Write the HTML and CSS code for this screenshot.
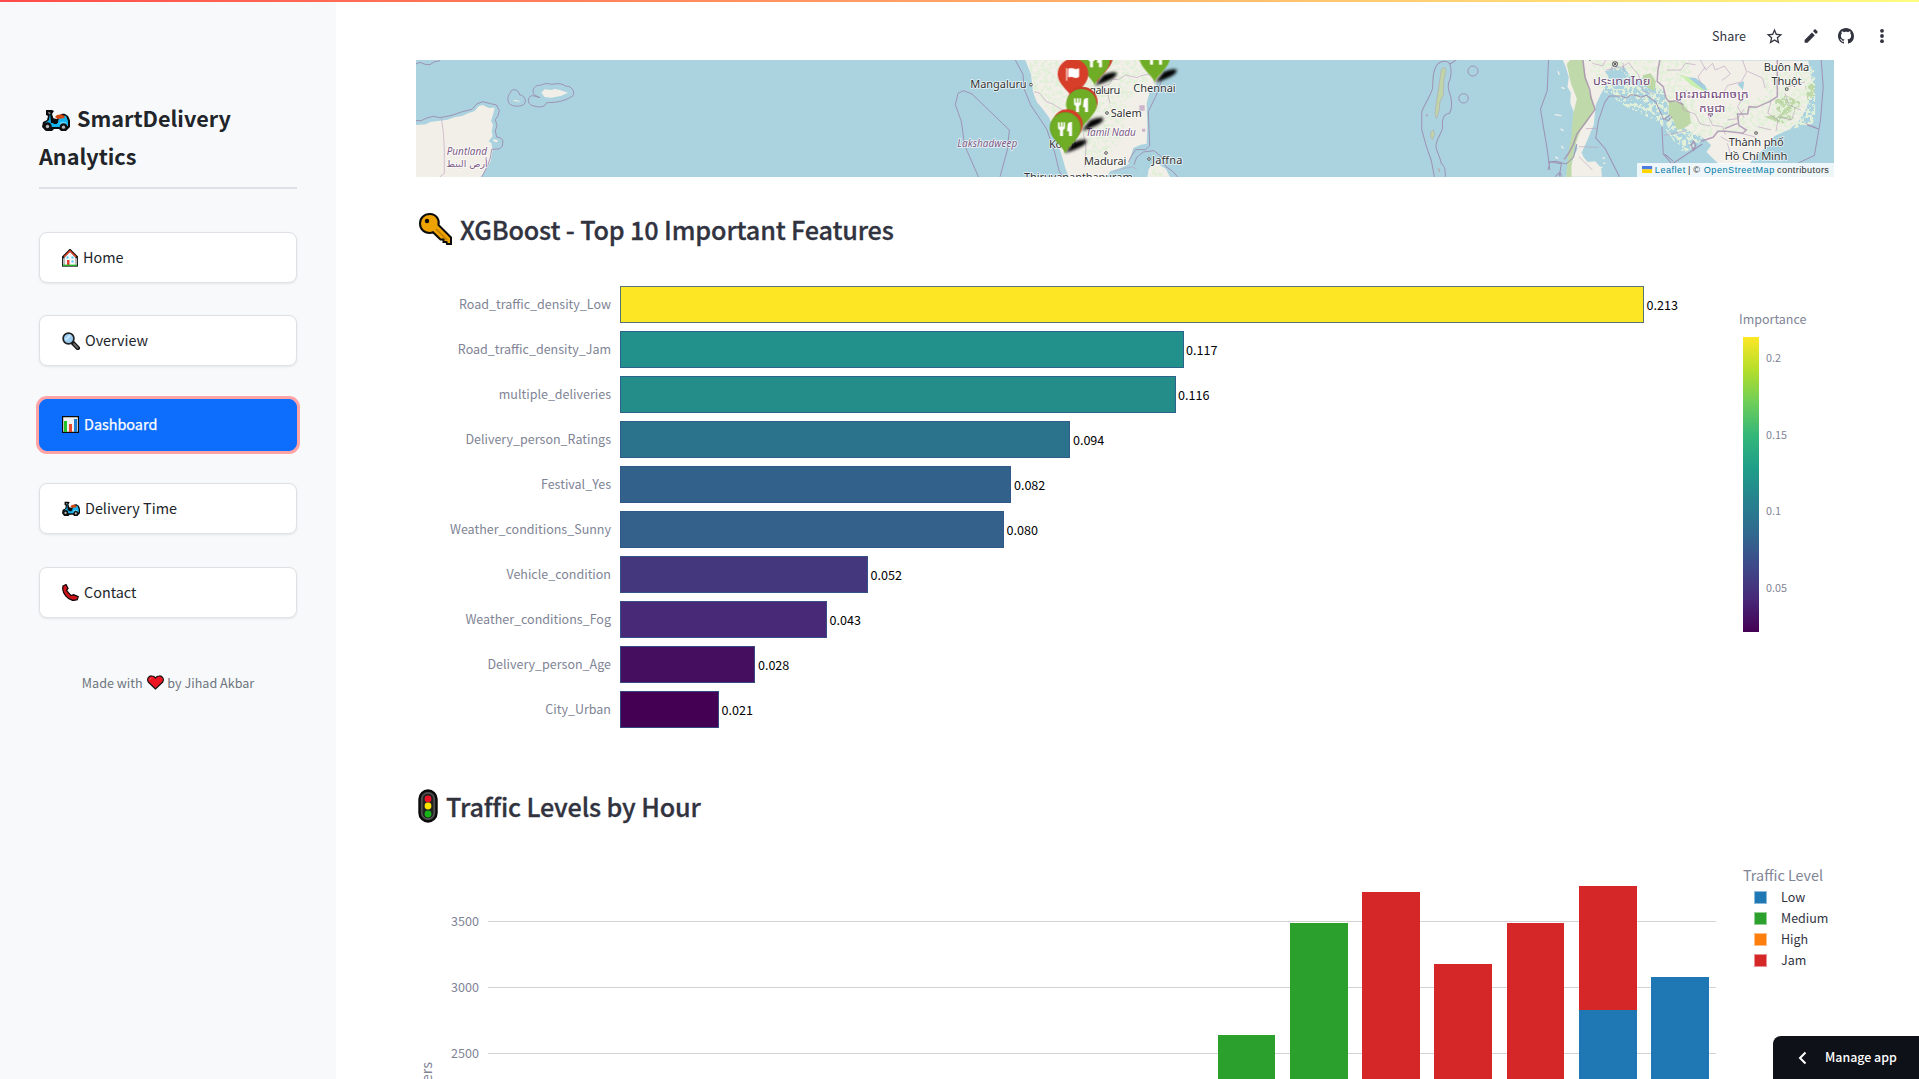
FILE: index.html
```html
<!DOCTYPE html>
<html lang="en">
<head>
<meta charset="utf-8">
<title>SmartDelivery Analytics</title>
<link rel="stylesheet" href="styles.css">
</head>
<body>
<svg class="defs" width="0" height="0" aria-hidden="true">
  <symbol id="scooter" viewBox="0 0 28 22" preserveAspectRatio="none">
    <path d="M4 1h6l2 1-2 3 2 6 3-1c1-3 4-6 8-5l3 2c2 3 3 7 2 11l-4 4h-5l-2-2h-5l-2 2H4l-4-4 1-5 4-2 1-4-2-1z" fill="#0b0b0b"/>
    <path d="M8 4l1 10h7c0-5 3-8 8-7l2 5v5l-9 1H10l-7-4 4-3z" fill="#16b4ef"/>
    <path d="M6 3l3 1-2 1z" fill="#bbb"/>
    <path d="M13 8c2-3 7-3 9-1l1 2-7 1z" fill="#d24a10"/>
    <path d="M10 9l5 1v5h-3l-3-3z" fill="#0b0b0b"/>
    <ellipse cx="21" cy="14.500" rx="3.500" ry="1.800" fill="#63d6fb"/>
    <circle cx="5.500" cy="17.500" r="4.200" fill="#111"/><circle cx="5.500" cy="17.500" r="1.700" fill="#bbb"/>
    <circle cx="21.500" cy="18" r="3.700" fill="#111"/><circle cx="21.500" cy="18.200" r="1.600" fill="#bbb"/>
  </symbol>
</svg>

<div class="app">
  <aside class="sidebar">
    <h1 class="brand"><svg class="brand-icon"><use href="#scooter"/></svg>SmartDelivery<br>Analytics</h1>
    <nav class="nav">
      <a class="nav-item"><svg class="ico" width="16" height="18" viewBox="0 0 16 18"><path d="M2 8v8.500h12V8L8 2z" fill="#f7f7f7" stroke="#777"/><path d="M.6 8.600L8 1.200l7.400 7.400" fill="none" stroke="#111" stroke-width="2.400"/><path d="M2 7.800L8 2l6 5.800" fill="none" stroke="#e8452c" stroke-width="1.300"/><path d="M5 11h2.500v5H5z" fill="#e33b2e"/><path d="M4.500 7.500h2v2h-2zm5 0h2v2h-2zm0 4h2v2h-2z" fill="#4ccbf2"/><path d="M.5 8v9M15.500 8v9M0 17.200h16" stroke="#222"/><path d="M1 16.300h14" stroke="#1fb52a" stroke-width="1.300"/></svg><span>Home</span></a>
      <a class="nav-item"><svg class="ico" width="18" height="18" viewBox="0 0 18 18"><path d="M10.500 10.500l5.300 5.500" stroke="#111" stroke-width="4.400" stroke-linecap="round"/><path d="M12 12l3.600 3.700" stroke="#666" stroke-width="2" stroke-linecap="round"/><circle cx="6.500" cy="6.500" r="5.400" fill="#9bcdf2" stroke="#222" stroke-width="1.700"/><path d="M3.500 8l5-5" stroke="#c9e6fa" stroke-width="1.800"/></svg><span>Overview</span></a>
      <a class="nav-item active"><svg class="ico" width="17" height="17" viewBox="0 0 17 17"><path d="M.6.600h15.800v15.800H.600z" fill="#f1f0f2" stroke="#0a0a0a" stroke-width="1.200"/><path d="M2 5h3v11H2z" fill="#24c52b"/><path d="M7 8h3v8H7z" fill="#e9472c"/><path d="M12 3h3v13h-3z" fill="#1d7fd3"/></svg><span>Dashboard</span></a>
      <a class="nav-item"><svg class="ico" width="18" height="15"><use href="#scooter"/></svg><span>Delivery Time</span></a>
      <a class="nav-item"><svg class="ico" width="17" height="17" viewBox="0 0 17 17"><path d="M1 2l3-1.400 2 3.800-1.500 2 4.500 5.200 2.600-.8 4.600 1.800-1 3-4 .9C5 15.500 1 9 .7 5z" fill="#d3131b" stroke="#180a0a" stroke-width="1.300"/></svg><span>Contact</span></a>
    </nav>
    <p class="made">Made with <svg class="heart" width="17" height="15" viewBox="0 0 17 15"><path d="M8.500 14L1.300 7C-.5 4 1.700.7 4.600.8 6.500.8 7.800 1.700 8.500 3 9.200 1.700 10.500.8 12.400.8c2.900-.1 5.100 3.200 3.300 6.200z" fill="#ee1522" stroke="#151515" stroke-width="1.200"/><path d="M3 4.500l1-1.500" stroke="#ff7a6c"/></svg> by Jihad Akbar</p>
  </aside>

  <main class="main">
    <header class="toolbar">
      <span class="share">Share</span>
      <svg width="19" height="19" viewBox="0 0 24 24"><path fill="currentColor" d="M22 9.240l-7.190-.62L12 2 9.190 8.630 2 9.240l5.460 4.730L5.820 21 12 17.270 18.180 21l-1.630-7.030L22 9.240zM12 15.400l-3.760 2.270 1-4.280-3.320-2.880 4.380-.38L12 6.100l1.710 4.040 4.380.38-3.320 2.880 1 4.280L12 15.400z"/></svg>
      <svg width="18" height="18" viewBox="0 0 24 24"><path fill="currentColor" d="M3.500 17.200V21h3.800L17.100 11.100l-3.800-3.800zM20.500 7.700c.6-.6.6-1.500 0-2.100l-2-2c-.6-.6-1.500-.6-2.100 0l-1.800 1.800 4 4z"/></svg>
      <svg width="16" height="16" viewBox="0 0 16 16"><path fill="currentColor" d="M8 0C3.580 0 0 3.580 0 8c0 3.540 2.290 6.530 5.470 7.590.4.070.55-.17.55-.38 0-.19-.01-.82-.01-1.490-2.010.37-2.530-.49-2.690-.94-.09-.23-.48-.94-.82-1.130-.28-.15-.68-.52-.01-.53.63-.01 1.080.58 1.230.82.72 1.210 1.870.87 2.330.66.070-.52.28-.87.51-1.070-1.780-.2-3.640-.89-3.640-3.950 0-.87.31-1.590.82-2.150-.08-.2-.36-1.020.08-2.120 0 0 .67-.21 2.200.82.640-.18 1.320-.27 2-.27s1.360.09 2 .27c1.530-1.040 2.200-.82 2.200-.82.44 1.100.16 1.920.08 2.120.51.56.82 1.270.82 2.150 0 3.070-1.870 3.750-3.650 3.950.29.25.54.73.54 1.480 0 1.070-.01 1.930-.01 2.200 0 .21.15.46.55.38A8.010 8.010 0 0 0 16 8c0-4.420-3.580-8-8-8z"/></svg>
      <svg class="more" width="16" height="16" viewBox="0 0 16 16"><g fill="currentColor"><circle cx="8" cy="2.800" r="1.900"/><circle cx="8" cy="8" r="1.900"/><circle cx="8" cy="13.200" r="1.900"/></g></svg>
    </header>

    <svg class="map" viewBox="416 60 1418 117" width="1418" height="117">
      <defs>
        <filter id="veg" x="0" y="0" width="1" height="1"><feTurbulence type="fractalNoise" baseFrequency=".09" numOctaves="4" seed="7"/><feColorMatrix values="0 0 0 0 .76  0 0 0 0 .87  0 0 0 0 .7  14 0 0 0 -6.900"/><feComposite in2="SourceGraphic" operator="in"/></filter>
        <filter id="soft" x="-.2" y="-.2" width="1.400" height="1.400"><feGaussianBlur stdDeviation="4"/></filter>
        <path id="pin" d="M0 76C-7 54-46 32-46 0A46 46 0 0 1 46 0C46 32 7 54 0 76Z"/>
        <path id="shade" d="M0 76L26 44C44 36 66 32 66 40C64 54 30 66 0 76Z"/>
        <g id="fork" fill="#fff"><path d="M-22-19h5v13h3v-13h5v13h3v-13h5v15c0 5-3 7-6 8v18h-9V4c-4-1-6-4-6-8zM7-14c2-5 7-7 13-6v42h-9V8H5z"/></g>
      </defs>
      <rect x="416" y="60" width="1418" height="117" fill="#aad3df"/>

      <!-- Horn of Africa -->
      <g transform="translate(400 50) scale(.33333)">
        <path class="land" d="M48 225l30-2 12-7 30-4 22-3 22-7 24-5 18-8 18-6 12-14 12-4 18 9 18-1-3 14-8 25 6 12-4 20 3 14-12 16 8 5 4 20-6 35-12 20-12 20-8 10-8 5H48z"/>
        <path class="land" d="M424 128l10-10 20 2 10-3 16 3 24 8-20 9-30 6-20-2zM280 268l14 3-3 6-12-4zM340 149l18 3 1 3-17-2zM404 154l8 1M418 154l4 2"/>
        <path class="sea-line" d="M48 42l12-5 16 6 14 1 12-8 18-4M48 212h16l16-8 20-5 20 4 36-7 28-10 32-8 14-16 18-7 24 6 17 4 9 16-4 16-8 12 5 18-5 16 4 18 10 2 9 8-2 18-10 8-22 1-4 26-8 22-12 24-6 10"/>
        <path class="sea-line" d="M334 122c9-6 22-3 25 13 15 0 22 18 13 28-12 8-34 8-45-3-6-12-3-24 3-30zM400 130c-4-14 6-26 22-24 12-7 22-6 34-3 18-4 32-2 40 5 20 0 28 16 24 28-20 16-48 22-80 22-4 12-20 16-38 10-18-2-22-20-10-30 8-3 16 2 28 5-10-6-18-6-20-13z"/>
        <path class="border" d="M124 205l6 40 3 55v70l-15 12"/>
        <g class="region"><text x="140" y="315" textLength="121">Puntland</text><text class="arabic" x="139" y="351" textLength="124" lengthAdjust="spacingAndGlyphs">أرض البنط</text></g>
      </g>

      <!-- Southern India and Sri Lanka -->
      <g transform="translate(900 50) scale(.33333)">
        <path class="land" d="M375 28l18 45 6 52 11 30 20 24 18 25 18 55 20 60 10 35 10 28h116l8-18 32-10 24-12 6-22 8-26 22-10 18-3 2-54-2-68 10-36 28-32 12-20-4-45zM742 382l4-25 18-22 34 22 12 25z"/>
        <path class="veg" filter="url(#veg)" d="M385 28l15 90 40 62 70 30 60 150 40-20 60-80 10-100 70-70-20-60zM748 380l15-40 32 20 8 20z"/>
        <path class="border" d="M402 125l18 5 20 26 18 6 22 14 22 8M605 110l24-8 8-15 18 2 22-14 34 8 12-6 20-4 18 6M550 250l8 40-4 60M620 120l10 40"/>
        <path class="sea-line" d="M345 28l24 45 3 42 20 50 48 72 24 70 14 58 12 16M190 122l26 10 112 108-6 60-22 80M190 122l-16 8-8 34 18 50 10 72 42 96M785 90l-18 50-22 44 4 104-12 11h-30l-12 18-10 20M702 344l8-22 20-16 32-4 20 16 16 32 20 14 18 20"/>
        <path class="border" d="M640 365l30-10 30-4 10 8"/><path d="M718 166h16v16h-16zM726 236h10v9h-10z" fill="#cdb6cc"/>
        <g class="city"><text x="211" y="115" textLength="169">Mangaluru</text><text x="568" y="132" textLength="93">galuru</text><text x="700" y="125" textLength="127">Chennai</text><text x="632" y="200" textLength="93">Salem</text><text x="447" y="293" textLength="82">Kochi</text><text x="552" y="345" textLength="127">Madurai</text><text x="756" y="341" textLength="91">Jaffna</text><text x="372" y="393" textLength="326">Thiruvananthapuram</text></g>
        <g class="region"><text x="558" y="257" textLength="149">Tamil Nadu</text><text x="172" y="291" textLength="180">Lakshadweep</text></g>
        <g fill="#fff" stroke="#555" stroke-width="3"><circle cx="393" cy="104" r="4"/><circle cx="621" cy="189" r="4"/><circle cx="618" cy="309" r="4"/><circle cx="747" cy="327" r="4"/></g>
        <g filter="url(#soft)"><use href="#shade" x="584" y="31"/><use href="#shade" x="764" y="22"/><use href="#shade" x="544" y="167"/><use href="#shade" x="494" y="233"/></g>
        <use href="#pin" x="592" y="22" fill="#c93a28"/><use href="#pin" x="584" y="29" fill="#70ad26"/><use href="#fork" x="586" y="30"/>
        <use href="#pin" x="764" y="21" fill="#70ad26"/><use href="#fork" x="766" y="22"/>
        <use href="#pin" x="519" y="72" fill="#d63e2a"/><path d="M500 54v38M506 57c12-6 18 6 30-1v24c-12 7-18-5-30 1z" fill="#fff" stroke="#fff" stroke-width="3"/>
        <use href="#pin" x="547" y="156" fill="#c93a28"/><use href="#pin" x="544" y="163" fill="#70ad26"/><use href="#fork" x="544" y="164"/>
        <use href="#pin" x="502" y="224" fill="#d63e2a"/><use href="#pin" x="496" y="233" fill="#70ad26" stroke="#61991f" stroke-width="2"/><use href="#fork" x="496" y="236"/>
      </g>

      <!-- Andaman Sea and Indochina -->
      <g transform="translate(1390 0) scale(.33738 .33333)">
        <path d="M152 208l10-6 4 12-6 24-2 48-10 20-2 24-8 26-5-14 5-40 6-36zM121 396l8-6 3 14-6 14-6-6zM142 506l6 2-2 8z" fill="#bfd5a8" stroke="#b49aae" stroke-width="1.500"/>
        <path class="sea-line" d="M196 180l-18 12c-12-14-34-8-42 8-12 24-8 50-10 66-8 26-24 46-32 70v52l14 52 14 40 10 52M176 190c8 14 5 34 2 48-10 20-4 34 2 52 4 20 4 38-4 50-20 4-22 20-20 44-4 18-20 34-20 56 4 20 14 34 16 50 12 8 12 22 12 40"/>
        <g fill="none" stroke="#9b88ab" stroke-width="2.500"><circle cx="246" cy="213" r="15"/><circle cx="218" cy="295" r="14"/></g><circle cx="109" cy="346" r="3" fill="#b49aae"/>
        <path class="land" d="M512 180l8 18 10 34-4 28 10 18-2 30 10 26 4 30-6 30 8 30 6 22-12 24-8 30-16 30h108l-2-26-18-20-22 2-12-14-6-14 18-40 18-44 6-60 14-30 18-32 6-16-2-20 18-18 30 2 14 22 24 14 30-6 20 16 6 14 24 12 6 20 8 30-2 16 10 22 16 2 20 22 18 8 10 12 16 0 20 14 18 18-14 20 36 36h90l30-34 22-16 24-34 40-18 30-24 24-40 12-40 4-44-10-60z"/>
        <path d="M534 180h38l8 50 14 50 14 46-24 40-20 26-16 46-10 56v38h-16l6-70 10-56 4-60 12-50-18-46-12-58z" fill="#bfd9aa"/>
        <path class="veg" filter="url(#veg)" d="M590 180h300l20 160 220-60 130-60v110l-120 60-180 10-90 60-70-90-100-50-100-70z"/>
        <path d="M826 300l40 10 22 26 4 34-14 10-12 8-16 0-10-28-14-18zM1140 300l34-14 42 20-4 18-46 22-20-16z" fill="#bdd7a6"/>
        <path d="M748 226l24-6 16 24-4 28-20-8zM1230 258l30-10-2 40-20 14zM1110 350l60-10 30 14-40 18z" fill="#bdd7a6"/>
        <path class="veg" filter="url(#veg)" d="M1100 200h160v170l-120 30z"/>
        <path d="M854 222l50 16 40 30-16 6-32-16-30-28z" fill="#c9efae"/><path d="M884 232l22 2 28 22 8 22-24-18zM1030 252l20-8-4 26z" fill="#a4cfdf"/>
        <path d="M498 214l4 10M488 344l20 3M506 386l8 7M508 438l6 8M490 470l8 6M508 262l10 4M630 474h7M632 490h6M618 502h12" stroke="#f2efe9" stroke-width="4"/>
        <path class="border" d="M600 190l30 8 10-18M640 210l50-10 18-12 12 18 14 14 12 26M660 196l-10 20M690 188l4 26M820 210h42l14-20 30 4M920 180l16 30 20-20 8 20M935 200l-22 30 10 24M965 210l26-12 18 24-26 20M1045 180l12 36-16 30-40 10-14 24M1060 214l44 20 8 30M780 280l-30-6-4-26M880 270l-20 30 10 30 34 12 16 30 30 6M940 340l16 36 30 4 8 24M1000 360l30-4 20-30M1050 290l-20 30 20 34M1130 300l-10 40 30 20-6 34M1170 280l14 36 34 14M1180 260l50-14M1150 350l40 10 10-28M1230 370l34 12M580 386l34-1M560 440l58 2M812 406l68-14M980 410l24 14 20-6M1040 400l40 10 10 20M1000 430l10 34M1090 380l40 10M560 470l40 40"/>
        <path class="nation" d="M572 180l6 52 14 36 4 26 12 34-26 36-28 38-12 34-14 26-12 16M800 180l-6 30-2 34 18 16 8 34 10 12M828 305l18-3 24 12M1148 180v110l-22 14-40 18-22-2-4 22-30 0 4 34 22 14-10 10-50-6-24 0-14 18-36 12M1030 370l-38 16M900 424l6 12-6 14-8-14z"/>
        <path class="sea-line" d="M470 180l-4 92-20 56 20 120 8 62M468 486l24-2 30 8 22-20 10-40M468 510l6-24 34 5-6 38M490 530l14-14 4 14M680 530l-26-52-16-32-28-32 8-52 18-54 14-20h36l14 6 14-10 16 2 14 6 16-6 28 20 22 50 16 6 10-12M806 380l4 82 26 30 90-60M840 484l-26-22M830 345l-20 14M1278 180l6 80-8 100-18 106-50 24M1236 374l36 14"/>
        <path d="M636 214l20-4 36 4 8 14-14 8-34-2z" fill="#aad3df"/>
        <g class="country"><text class="thai" x="602" y="256" textLength="170" lengthAdjust="spacingAndGlyphs">ประเทศไทย</text><text class="khmer" x="845" y="294" textLength="218" lengthAdjust="spacingAndGlyphs">ព្រះរាជាណាចក្រ</text><text class="khmer" x="916" y="337" textLength="78" lengthAdjust="spacingAndGlyphs">កម្ពុជា</text></g>
        <g class="city"><text x="1108" y="213" textLength="135">Buôn Ma</text><text x="1131" y="254" textLength="89">Thuột</text><text x="1004" y="439" textLength="163">Thành phố</text><text x="992" y="479" textLength="186">Hồ Chí Minh</text></g>
        <g fill="#fff" stroke="#555" stroke-width="3"><circle cx="1176" cy="267" r="4"/><circle cx="1085" cy="399" r="4"/><circle cx="667" cy="192" r="7"/></g><circle cx="667" cy="192" r="3" fill="#333"/><path d="M590 180h4" stroke="#333" stroke-width="3"/>
        <path d="M732 489h584v42H732z" fill="#fff" fill-opacity=".8"/>
        <path d="M747 498h30v10h-30z" fill="#4c7be1"/><path d="M747 508h30v11h-30z" fill="#ffd500"/>
        <g class="credit"><text class="link" x="785" y="519" textLength="90">Leaflet</text><text x="883" y="519">|</text><text x="899" y="519">©</text><text class="link" x="930" y="519" textLength="209">OpenStreetMap</text><text x="1147" y="519" textLength="154">contributors</text></g>
      </g>
    </svg>

    <h2 class="heading"><svg class="key" width="34" height="34" viewBox="0 0 34 34"><path d="M12 2C6 2 2 6 2 11.500S6 21 11.500 21c1.500 0 2.500-.3 3.500-.8l7.500 7.300h3v2.500h3l.5 2h4v-6.500L20.500 13C21.800 7.500 18 2 12 2z" fill="#eda200" stroke="#0b0b0b" stroke-width="2"/><path d="M18 17l11 11" stroke="#bf7d00" stroke-width="1.600"/><circle cx="9" cy="9" r="2.200" fill="#0b0b0b"/></svg><span>XGBoost - Top 10 Important Features</span></h2>

    <section class="importance">
      <div class="rows">
        <div class="row"><span class="label">Road_traffic_density_Low</span><i class="bar" style="width:1024px;background:#fde725"></i><span class="value">0.213</span></div>
        <div class="row"><span class="label">Road_traffic_density_Jam</span><i class="bar" style="width:563.500px;background:#22908b"></i><span class="value">0.117</span></div>
        <div class="row"><span class="label">multiple_deliveries</span><i class="bar" style="width:555.500px;background:#248d8a"></i><span class="value">0.116</span></div>
        <div class="row"><span class="label">Delivery_person_Ratings</span><i class="bar" style="width:450.400px;background:#2b738d"></i><span class="value">0.094</span></div>
        <div class="row"><span class="label">Festival_Yes</span><i class="bar" style="width:391.400px;background:#32618b"></i><span class="value">0.082</span></div>
        <div class="row"><span class="label">Weather_conditions_Sunny</span><i class="bar" style="width:384px;background:#34608c"></i><span class="value">0.080</span></div>
        <div class="row"><span class="label">Vehicle_condition</span><i class="bar" style="width:248px;background:#44377d"></i><span class="value">0.052</span></div>
        <div class="row"><span class="label">Weather_conditions_Fog</span><i class="bar" style="width:207px;background:#472977"></i><span class="value">0.043</span></div>
        <div class="row"><span class="label">Delivery_person_Age</span><i class="bar" style="width:135.400px;background:#450e5f"></i><span class="value">0.028</span></div>
        <div class="row"><span class="label">City_Urban</span><i class="bar" style="width:99px;background:#440154"></i><span class="value">0.021</span></div>
      </div>
      <div class="scale">
        <div class="scale-title">Importance</div>
        <div class="scale-body"><i class="ramp"></i><div class="ticks"><span>0.2</span><span>0.15</span><span>0.1</span><span>0.05</span></div></div>
      </div>
    </section>

    <h2 class="heading second"><svg class="light" width="20" height="34" viewBox="0 0 20 34"><rect x="1.500" y="1.500" width="17" height="31" rx="8.500" fill="#3a3a3a" stroke="#0a0a0a" stroke-width="2.400"/><rect x="4" y="4" width="12" height="26" rx="6" fill="#222" stroke="#777" stroke-width=".7"/><circle cx="10" cy="10" r="3.400" fill="#e81224"/><circle cx="10" cy="17" r="3.400" fill="#fde300"/><circle cx="10" cy="25" r="3.400" fill="#16b316"/></svg><span>Traffic Levels by Hour</span></h2>

    <section class="traffic">
      <svg class="traffic-plot" viewBox="416 831 1310 248" width="1310" height="248">
        <path d="M488 921.500h1228M488 987.500h1228M488 1053.500h1228" stroke="#d3d3d6"/>
        <path d="M1218 1035h57v44h-57zM1290 923h58v156h-58z" fill="#2ca02c"/>
        <path d="M1362 892h58v187h-58zM1434 964h58v115h-58zM1507 923h57v156h-57zM1579 886h58v124h-58z" fill="#d62728"/>
        <path d="M1579 1010h58v69h-58zM1651 977h58v102h-58z" fill="#1f77b4"/>
        <g class="axis" text-anchor="end"><text x="479" y="926">3500</text><text x="479" y="992">3000</text><text x="479" y="1058">2500</text></g>
        <text class="axis-title" transform="translate(432 1062) rotate(-90)" text-anchor="end">Orders</text>
      </svg>
      <div class="legend">
        <div class="legend-title">Traffic Level</div>
        <div class="legend-item"><i class="swatch low"></i><span>Low</span></div>
        <div class="legend-item"><i class="swatch medium"></i><span>Medium</span></div>
        <div class="legend-item"><i class="swatch high"></i><span>High</span></div>
        <div class="legend-item"><i class="swatch jam"></i><span>Jam</span></div>
      </div>
    </section>
  </main>
</div>
<div class="decoration"></div>
<button class="manage"><svg width="9" height="14" viewBox="0 0 9 14"><path d="M7.500 1.500L2 7l5.500 5.500" fill="none" stroke="#fff" stroke-width="2"/></svg><span>Manage app</span></button>
</body>
</html>
```
FILE: styles.css
```css
* { box-sizing: border-box; }
body {
  margin: 0;
  height: 1079px;
  overflow: hidden;
  background: #fff;
  color: #31333f;
  font-family: "Noto Sans CJK SC", "Noto Sans", sans-serif;
  font-size: 14.4px;
}
.defs { position: absolute; }
.app { display: flex; height: 1079px; }
.decoration {
  position: absolute;
  inset: 0 0 auto 0;
  height: 2px;
  background: linear-gradient(90deg, #ff4b4b, #fffd80);
}

/* Sidebar */
.sidebar { flex: 0 0 336px; padding: 99px 39px 0; background: #f8f9fb; }
.brand {
  margin: 0 0 43px;
  height: 90px;
  border-bottom: 2px solid #dee2e6;
  color: #212529;
  font-size: 21.600px;
  font-weight: 700;
  line-height: 38px;
  white-space: nowrap;
}
.brand-icon { width: 28px; height: 22px; margin: 0 7px 0 3px; vertical-align: -4px; }
.nav { display: flex; flex-direction: column; gap: 32.400px; }
.nav-item {
  display: flex;
  align-items: center;
  height: 51px;
  padding: 0 22px;
  border: 1px solid #dee2e6;
  border-radius: 8px;
  background: #fff;
  box-shadow: 0 1px 3px rgba(0, 0, 0, .08);
  color: #212529;
}
.nav-item .ico { margin-right: 5px; }
.nav-item span { padding-bottom: 2px; }
.nav-item.active {
  height: 52px;
  border-color: #0d6efd;
  background: #0d6efd;
  box-shadow: 0 0 0 3px #ffa3a7;
  color: #fff;
  -webkit-text-stroke: .25px #fff;
}
.made { margin: 54px 0 0; text-align: center; color: #6c757d; font-size: 12.600px; line-height: 22px; white-space: nowrap; }
.heart { margin: 0 1px; vertical-align: -2px; }

/* Main column */
.main { flex: 1; min-width: 0; padding-left: 80px; }
.toolbar { display: flex; align-items: center; justify-content: flex-end; height: 60px; padding: 12px 29px 0 0; gap: 18px; }
.share { margin-right: 1px; padding-bottom: 2px; font-size: 12.600px; }
.more { margin-left: 2px; }
.map { display: block; }
.land { fill: #f2efe9; }
.veg { fill: #c2dfb2; }
.sea-line { fill: none; stroke: #9b88ab; stroke-width: 3; opacity: .85; }
.border { fill: none; stroke: #b99ebd; stroke-width: 2.200; opacity: .8; }
.nation { fill: none; stroke: #a688ac; stroke-width: 4.500; opacity: .75; }
.city, .region, .country, .credit { font-family: "Noto Sans", "DejaVu Sans", sans-serif; }
.city text, .region text, .country text { paint-order: stroke; stroke: #fff; stroke-opacity: .75; stroke-width: 5px; stroke-linejoin: round; }
.city { font-size: 33px; fill: #333; }
.region { font-size: 30px; font-style: italic; fill: #7d5a86; }
.arabic { font-family: "DejaVu Sans", sans-serif; font-style: normal; font-size: 28px; }
.country { font-size: 31px; fill: #71467a; }
.thai { font-family: "Noto Sans Thai", "Noto Sans", sans-serif; }
.khmer { font-family: "Noto Sans Khmer", "Noto Sans", sans-serif; }
.credit { font-family: "Liberation Sans", sans-serif; font-size: 27px; fill: #333; }
.link { fill: #0078a8; }

.heading {
  display: flex;
  align-items: center;
  height: 48px;
  margin: 28px 0 29px;
  font-size: 25.200px;
  font-weight: 500;
  letter-spacing: -.14px;
  -webkit-text-stroke: .3px #31333f;
  line-height: 46px;
  white-space: nowrap;
}
.heading span { padding-bottom: 1px; }
.heading.second { margin: 50px 0 1px; }
.key { margin: 0 8px 0 2px; }
.light { margin: 0 8px 0 2px; }

/* Feature importance */
.importance { display: flex; }
.rows { flex: 0 0 1323px; }
.row { display: grid; grid-template-columns: 195px auto 1fr; align-items: center; height: 45px; column-gap: 0; font-size: 12.600px; }
.label { padding-bottom: 2px; text-align: right; color: #808495; font-size: 12.500px; }
.bar { display: block; height: 37px; margin-left: 9px; border: 1px solid rgba(48, 88, 138, .8); }
.value { padding-left: 2.500px; color: #000; }
.scale { padding-top: 27px; color: #808495; }
.scale-title { height: 28px; line-height: 20px; font-size: 12.500px; }
.scale-body { display: flex; gap: 7px; padding-left: 4px; }
.ramp { width: 16px; height: 295px; background: linear-gradient(0deg, #440154, #482878 11.100%, #3e4989 22.200%, #31688e 33.300%, #26828e 44.400%, #1f9e89 55.600%, #35b779 66.700%, #6ece58 77.800%, #b5de2b 88.900%, #fde725); }
.ticks { display: flex; flex-direction: column; gap: 56.600px; padding-top: 10px; font-size: 10.800px; line-height: 20px; }

/* Traffic by hour */
.traffic { display: flex; height: 248px; overflow: hidden; }
.axis { font-size: 12.600px; fill: #808495; }
.axis-title { font-size: 14.400px; fill: #808495; }
.legend { padding: 32px 0 0 17px; }
.legend-title { height: 24px; line-height: 24px; font-size: 14.400px; color: #808495; white-space: nowrap; }
.legend-item { display: flex; align-items: center; height: 21px; padding-left: 11px; gap: 14px; font-size: 12.500px; }
.legend-item span { padding-bottom: 2px; }
.swatch { width: 13px; height: 13px; border: 1px solid rgba(255, 255, 255, .5); }
.low { background: #1f77b4; }
.medium { background: #2ca02c; }
.high { background: #ff7f0e; }
.jam { background: #d62728; }

.manage {
  position: absolute;
  right: 0;
  bottom: 0;
  display: flex;
  align-items: center;
  gap: 18px;
  width: 146px;
  height: 43px;
  padding: 0 0 0 25px;
  border: 0;
  border-radius: 8px 0 0 0;
  background: #0e1117;
  color: #fff;
  font: 500 12.400px "Noto Sans CJK SC", sans-serif;
  white-space: nowrap;
}
.manage span { padding-bottom: 2px; }
```
